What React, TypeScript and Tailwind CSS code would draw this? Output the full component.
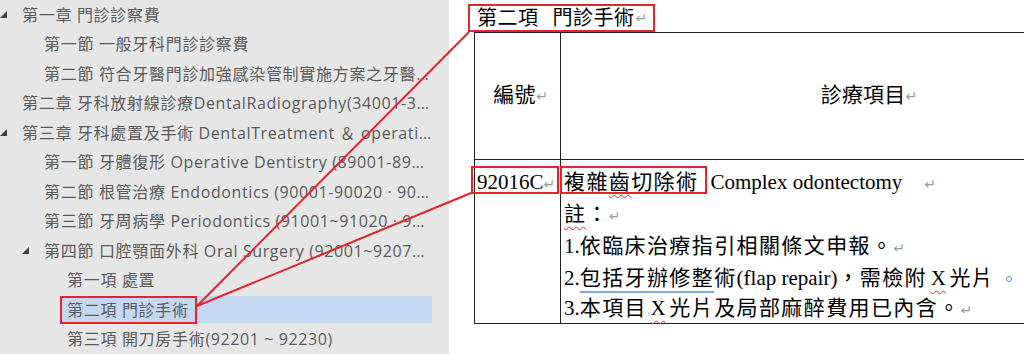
import React from "react";

type Row = { level: number; text: string; expanded?: boolean; selected?: boolean };

const rows: Row[] = [
  { level: 0, text: "第一章 門診診察費", expanded: true },
  { level: 1, text: "第一節 一般牙科門診診察費" },
  { level: 1, text: "第二節 符合牙醫門診加強感染管制實施方案之牙醫門診診察費" },
  { level: 0, text: "第二章 牙科放射線診療DentalRadiography(34001-34004)" },
  { level: 0, text: "第三章 牙科處置及手術  DentalTreatment ＆ operation", expanded: true },
  { level: 1, text: "第一節 牙體復形  Operative Dentistry (89001-89015)" },
  { level: 1, text: "第二節 根管治療  Endodontics (90001-90020 · 90091)" },
  { level: 1, text: "第三節 牙周病學 Periodontics (91001~91020 · 91089)" },
  { level: 1, text: "第四節 口腔顎面外科 Oral Surgery (92001~92070 · 92091)", expanded: true },
  { level: 2, text: "第一項 處置" },
  { level: 2, text: "第二項 門診手術", selected: true },
  { level: 2, text: "第三項 開刀房手術(92201 ~ 92230)" },
];

const cjkRe = /([\u3000-\u9fff\uff00-\uffef]+)/;

function Runs({ text }: { text: string }) {
  const parts = text.split(cjkRe).filter((p) => p.length > 0);
  return (
    <>
      {parts.map((p, i) =>
        cjkRe.test(p) ? (
          <span key={i} className="tracking-[0.7px]">
            {p}
          </span>
        ) : (
          <span key={i} className="tracking-[0.6px]">
            {p}
          </span>
        )
      )}
    </>
  );
}

const Tri = () => (
  <svg width="7" height="7" viewBox="0 0 7 7" className="shrink-0">
    <polygon points="7,0 7,7 0,7" fill="#404040" />
  </svg>
);

function TreeRow({ row }: { row: Row }) {
  if (row.selected) {
    return (
      <div className="flex h-[29.5px] w-[432px] items-center pl-[60px]">
        <div className="flex h-[27px] flex-1 items-center bg-[#c5d8f1]">
          <div className="flex h-[28px] items-center border-2 border-[#e3242b] pl-[5px] pr-[6px]">
            <span className="whitespace-pre">
              <Runs text={row.text} />
            </span>
          </div>
        </div>
      </div>
    );
  }
  const pl = row.level === 0 ? "pl-0" : row.level === 1 ? "pl-[22px]" : "pl-[45px]";
  return (
    <div className={`flex h-[29.5px] w-[432px] items-center ${pl}`}>
      <div className="flex w-[22px] shrink-0 items-center">{row.expanded ? <Tri /> : null}</div>
      <span className="min-w-0 truncate">
        <Runs text={row.text} />
      </span>
    </div>
  );
}

const Ret = ({ cls = "" }: { cls?: string }) => (
  <span className={`font-['DejaVu_Sans',sans-serif] text-[14px] text-[#9a9a9a] tracking-normal ${cls}`}>↵</span>
);

const C = ({ children, cls = "" }: { children: React.ReactNode; cls?: string }) => (
  <span className={`tracking-[1.4px] ${cls}`}>{children}</span>
);

const wavy = "underline decoration-wavy decoration-[#e0262b] decoration-1 underline-offset-[5px]";

const X = () => (
  <span className={`inline-block w-[22.4px] text-center ${wavy}`}>X</span>
);

export default function App() {
  return (
    <div className="relative flex h-[354px] w-[1024px] overflow-hidden bg-white">
      {/* Left navigation pane */}
      <div className="h-full w-[449px] shrink-0 bg-[#e6e6e6] font-['Open_Sans','Noto_Sans_CJK_TC',sans-serif] text-[16px] text-[#5a5a5a]">
        {rows.map((r, i) => (
          <TreeRow key={i} row={r} />
        ))}
      </div>

      {/* Document */}
      <div className="h-full flex-1 overflow-hidden font-['Liberation_Serif','Noto_Sans_CJK_TC',serif] text-black">
        <div className="ml-[19px] mt-[4px] inline-flex h-[28px] items-center border-2 border-[#e3242b] pl-[7px] pr-[6px] text-[20px] leading-none">
          <span className="tracking-[0.5px]">第二項</span>
          <span className="ml-[14px] tracking-[0.5px]">門診手術</span>
          <Ret cls="ml-[1px]" />
        </div>

        <div className="ml-[25px] grid w-[700px] grid-cols-[86px_614px] grid-rows-[127px_163px] border-t border-l border-b border-[#222] text-[21px]">
          <div className="flex items-center justify-center border-r border-b border-[#222] pl-[6px]">
            <span className="tracking-[0.5px]">編號</span>
            <Ret />
          </div>
          <div className="flex items-center justify-center border-b border-[#222] pl-[2px]">
            <span className="tracking-[0.2px]">診療項目</span>
            <Ret />
          </div>

          <div className="relative border-r border-[#222] pl-[2px] pt-[7px] leading-[30.5px]">
            <span className="absolute left-[-4px] top-[6px] h-[28px] w-[88px] border-2 border-[#e3242b]" />
            <span>92016C</span>
            <Ret />
          </div>
          <div className="relative pl-[3px] pt-[7px] leading-[30px] whitespace-nowrap">
            <span className="absolute left-[-1px] top-[6px] h-[28px] w-[147px] border-2 border-[#e3242b]" />
            <div>
              <C>
                複雜<span className={wavy}>齒</span>切除術
              </C>
              <span className="ml-[12px]">Complex odontectomy</span>
              <Ret cls="ml-[22px]" />
            </div>
            <div>
              <C>
                <span className={wavy}>註</span>：
              </C>
              <Ret />
            </div>
            <div>
              1.<C>依臨床治療指引相關條文申報。</C>
              <Ret />
            </div>
            <div>
              2.
              <C cls="underline decoration-[#7da6e6] decoration-[1.5px] underline-offset-[6px]">包括牙辦修整</C>
              <C>術</C>
              (flap repair)
              <C>，需檢附</C>
              <X />
              <C>光片</C>
              <span className="ml-[12px] inline-block h-[6px] w-[6px] -translate-y-[3px] rounded-full border border-[#5b8def]" />
            </div>
            <div>
              3.<C>本項目</C>
              <X />
              <C>光片及局部麻醉費用已內含。</C>
              <Ret />
            </div>
          </div>
        </div>
      </div>

      {/* Annotation connectors */}
      <svg className="pointer-events-none absolute left-0 top-0" width="1024" height="354" viewBox="0 0 1024 354">
        <line x1="197" y1="306" x2="469" y2="32" stroke="#e3242b" strokeWidth="2" />
        <line x1="197" y1="306" x2="471" y2="193" stroke="#e3242b" strokeWidth="2" />
      </svg>
    </div>
  );
}
